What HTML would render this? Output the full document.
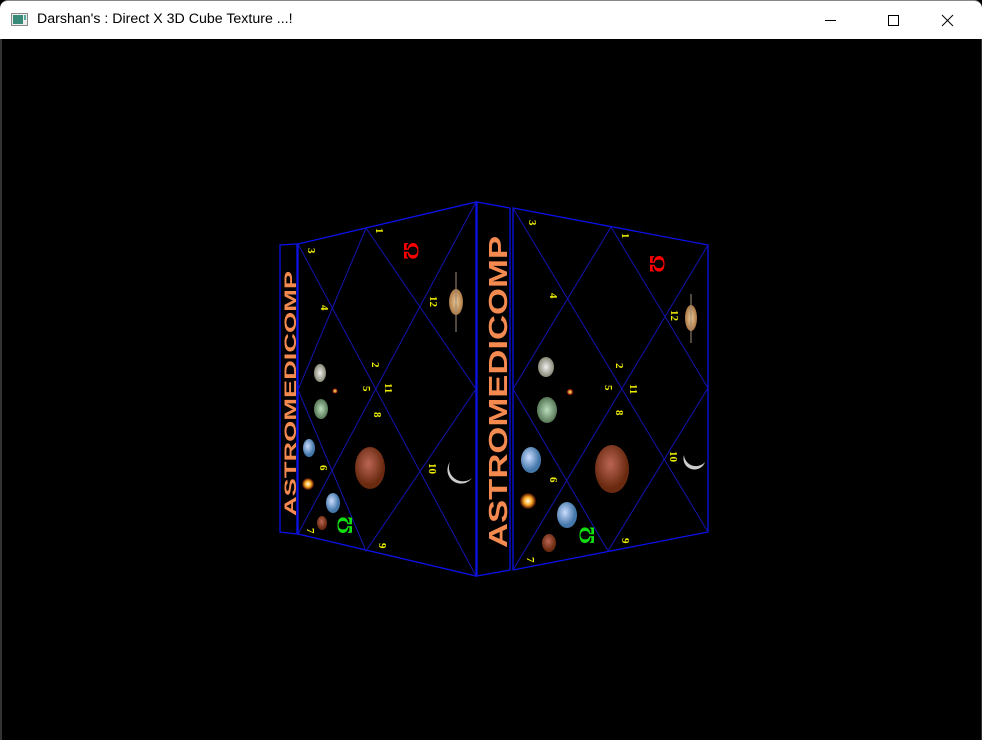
<!DOCTYPE html>
<html><head><style>
html,body{margin:0;padding:0;width:982px;height:740px;overflow:hidden;background:#000}
.tb{position:absolute;left:0;top:0;width:982px;height:39px;background:#fff;border-radius:8px 8px 0 0;border-top:1px solid #888;box-sizing:border-box}
.t{position:absolute;left:37px;top:10px;font:14.2px "Liberation Sans",sans-serif;color:#000}
</style></head><body>
<div style="position:absolute;left:0;top:39px;width:982px;height:701px;background:#000;border-left:2px solid #333;border-right:1px solid #333;box-sizing:border-box"></div>
<div class="tb">
<svg style="position:absolute;left:11px;top:12px" width="18" height="14"><rect x="0.5" y="0.5" width="16" height="12" fill="#eee" stroke="#888"/><rect x="2" y="2" width="10" height="9" fill="#3a8a7a"/><rect x="13" y="2" width="2" height="5" fill="#5a9"/></svg>
<div class="t">Darshan's : Direct X 3D Cube Texture ...!</div>
<svg style="position:absolute;left:820px;top:12px" width="150" height="16" stroke="#000" fill="none" stroke-width="1">
<line x1="5" y1="7.5" x2="16" y2="7.5"/><rect x="68.5" y="2.5" width="10" height="10"/><line x1="122" y1="2" x2="133" y2="13"/><line x1="133" y1="2" x2="122" y2="13"/></svg>
</div>
<svg style="position:absolute;left:0;top:0" width="982" height="740">
<defs>
<radialGradient id="pale"><stop offset="0" stop-color="#eee"/><stop offset="1" stop-color="#887"/></radialGradient>
<radialGradient id="grn"><stop offset="0" stop-color="#bdb"/><stop offset="1" stop-color="#575"/></radialGradient>
<radialGradient id="blu" cx="0.4" cy="0.4"><stop offset="0" stop-color="#cdf"/><stop offset="1" stop-color="#47a"/></radialGradient>
<radialGradient id="sun"><stop offset="0" stop-color="#ffe"/><stop offset="0.5" stop-color="#fa2"/><stop offset="1" stop-color="#300"/></radialGradient>
<radialGradient id="mars" cx="0.45" cy="0.4"><stop offset="0" stop-color="#b65"/><stop offset="1" stop-color="#6a2a10"/></radialGradient>
<radialGradient id="sat"><stop offset="0" stop-color="#ec9"/><stop offset="1" stop-color="#a74"/></radialGradient>
<radialGradient id="red"><stop offset="0" stop-color="#ff6"/><stop offset="1" stop-color="#900"/></radialGradient>
</defs>
<g stroke="#0a12e8" stroke-width="1.3" fill="none">
<polygon points="280,245 297,244 297,534 280,532"/>
<polygon points="298,244 476,202 476,576 298,534"/>
<polygon points="477,202 510,208 510,570 477,576"/>
<polygon points="513,208 708,245 708,532 513,570"/>
</g>
<g stroke="#1414b0" stroke-width="1" fill="none">
<polygon points="366,228 476,389 366,551 298,390"/>
<line x1="298" y1="244" x2="476" y2="576"/><line x1="476" y1="202" x2="298" y2="534"/>
<polygon points="611,227 708,388 608,551 513,389"/>
<line x1="513" y1="208" x2="708" y2="532"/><line x1="708" y1="245" x2="513" y2="570"/>
</g>
<g font-family="Liberation Sans,sans-serif" font-weight="bold" fill="#f58a50">
<text transform="translate(296,516) rotate(-90)" font-size="17" textLength="245" lengthAdjust="spacingAndGlyphs">ASTROMEDICOMP</text>
<text transform="translate(507,548) rotate(-90)" font-size="26" textLength="312" lengthAdjust="spacingAndGlyphs">ASTROMEDICOMP</text>
</g>
<g>
<ellipse cx="320" cy="373" rx="6" ry="9" fill="url(#pale)"/><circle cx="335" cy="391" r="2.5" fill="url(#red)"/>
<ellipse cx="321" cy="409" rx="7" ry="10" fill="url(#grn)"/><ellipse cx="309" cy="448" rx="6" ry="9" fill="url(#blu)"/>
<circle cx="308" cy="484" r="6" fill="url(#sun)"/><ellipse cx="333" cy="503" rx="7" ry="10" fill="url(#blu)"/>
<ellipse cx="322" cy="523" rx="5" ry="7" fill="url(#mars)"/><ellipse cx="370" cy="468" rx="15" ry="21" fill="url(#mars)"/>
<ellipse cx="456" cy="302" rx="7" ry="13" fill="url(#sat)"/><line x1="456" y1="272" x2="456" y2="332" stroke="#987" stroke-width="1.5" opacity="0.7"/>
<path d="M450,462 A14,14 0 0 0 472,478 A12,12 0 0 1 450,462Z" fill="#ccc"/>
<ellipse cx="546" cy="367" rx="8" ry="10" fill="url(#pale)"/><circle cx="570" cy="392" r="3" fill="url(#red)"/>
<ellipse cx="547" cy="410" rx="10" ry="13" fill="url(#grn)"/><ellipse cx="531" cy="460" rx="10" ry="13" fill="url(#blu)"/>
<circle cx="528" cy="501" r="8" fill="url(#sun)"/><ellipse cx="567" cy="515" rx="10" ry="13" fill="url(#blu)"/>
<ellipse cx="549" cy="543" rx="7" ry="9" fill="url(#mars)"/><ellipse cx="612" cy="469" rx="17" ry="24" fill="url(#mars)"/>
<ellipse cx="691" cy="318" rx="6" ry="13" fill="url(#sat)"/><line x1="691" y1="294" x2="691" y2="343" stroke="#987" stroke-width="1.5" opacity="0.7"/>
<path d="M684,455 A12,12 0 0 0 705,462 A10,10 0 0 1 684,455Z" fill="#ccc"/>
</g>
<g font-family="Liberation Serif,serif" font-weight="bold" font-size="22">
<text transform="translate(404,242) rotate(90)" fill="#f00">Ω</text>
<text transform="translate(650,255) rotate(90)" fill="#f00">Ω</text>
<text transform="translate(352,518) rotate(-90) translate(-16,0)" fill="#1d1">Ω</text>
<text transform="translate(594,528) rotate(-90) translate(-16,0)" fill="#1d1">Ω</text>
</g>
<g font-family="Liberation Serif,serif" font-weight="bold" font-size="11" fill="#ee0">
<text transform="translate(308,248) rotate(90)">3</text><text transform="translate(376,228) rotate(90)">1</text>
<text transform="translate(321,305) rotate(90)">4</text><text transform="translate(430,296) rotate(90)">12</text>
<text transform="translate(372,362) rotate(90)">2</text><text transform="translate(363,386) rotate(90)">5</text>
<text transform="translate(385,383) rotate(90)">11</text><text transform="translate(374,412) rotate(90)">8</text>
<text transform="translate(320,465) rotate(90)">6</text><text transform="translate(429,463) rotate(90)">10</text>
<text transform="translate(307,528) rotate(90)">7</text><text transform="translate(379,543) rotate(90)">9</text>
<text transform="translate(529,220) rotate(90)">3</text><text transform="translate(622,233) rotate(90)">1</text>
<text transform="translate(550,293) rotate(90)">4</text><text transform="translate(671,310) rotate(90)">12</text>
<text transform="translate(616,363) rotate(90)">2</text><text transform="translate(605,385) rotate(90)">5</text>
<text transform="translate(630,384) rotate(90)">11</text><text transform="translate(616,410) rotate(90)">8</text>
<text transform="translate(550,477) rotate(90)">6</text><text transform="translate(670,451) rotate(90)">10</text>
<text transform="translate(527,557) rotate(90)">7</text><text transform="translate(622,538) rotate(90)">9</text>
</g>
</svg>
</body></html>
